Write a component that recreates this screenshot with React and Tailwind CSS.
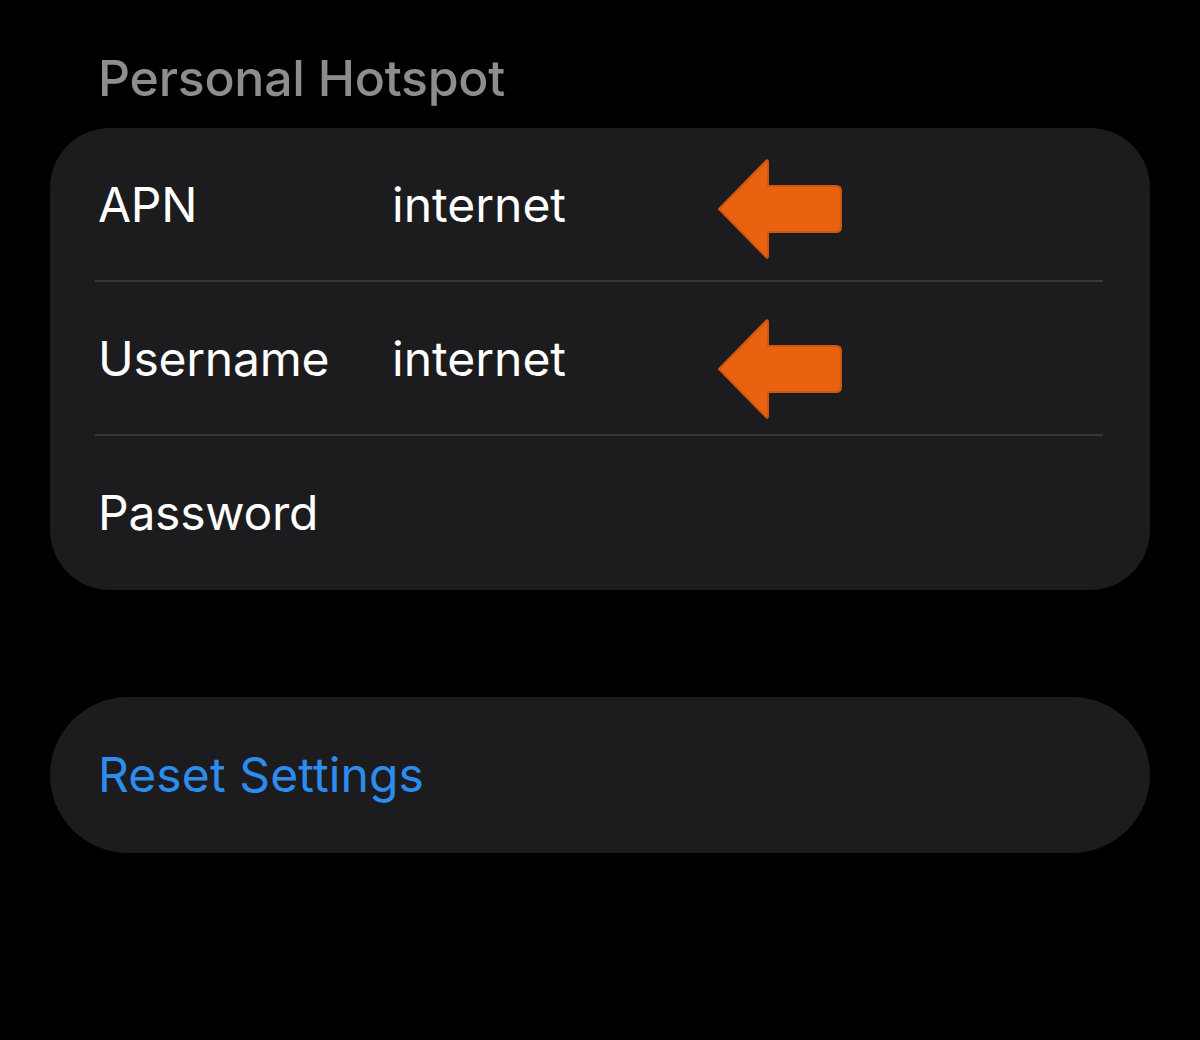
import React from "react";

function Arrow({ top }) {
  return (
    <svg
      width="126"
      height="100"
      viewBox="0 0 126 100"
      className={`absolute left-[667px] ${top}`}
    >
      <path
        d="M2 50 L49 2 Q51 0 51 3 L51 27 L119 27 Q124 27 124 32 L124 68 Q124 73 119 73 L51 73 L51 97 Q51 100 49 98 Z"
        fill="#e9620f"
        stroke="#d2560c"
        strokeWidth="2"
        strokeLinejoin="round"
      />
    </svg>
  );
}

function Row({ label, value, arrowTop, last }) {
  return (
    <div className="relative h-[154px] flex items-center">
      <div className="w-[342px] pl-[48px] text-[48px] text-white leading-none tracking-[-0.25px]">{label}</div>
      {value && <div className="text-[48px] text-white leading-none">{value}</div>}
      {arrowTop && <Arrow top={arrowTop} />}
      {!last && <div className="absolute bottom-0 left-[45px] right-[47px] h-[2px] bg-[#38383a]" />}
    </div>
  );
}

export default function App() {
  return (
    <div
      className="w-[1200px] h-[1040px] bg-black pl-[50px] pt-[53px]"
      style={{ fontFamily: "Inter, 'Liberation Sans', sans-serif" }}
    >
      <div className="pl-[48px] text-[50px] font-medium text-[#8d8d8d] leading-none h-[75px] tracking-[-0.25px]">
        Personal Hotspot
      </div>
      <div className="w-[1100px] rounded-[60px] bg-[#1c1c1e]">
        <Row label="APN" value="internet" arrowTop="top-[31px]" />
        <Row label="Username" value="internet" arrowTop="top-[37px]" />
        <Row label="Password" last />
      </div>
      <div className="mt-[107px] w-[1100px] h-[156px] rounded-[78px] bg-[#1c1c1e] flex items-center pl-[48px]">
        <span className="text-[48px] text-[#2d8cf0] leading-none tracking-[0.1px]">Reset Settings</span>
      </div>
    </div>
  );
}
